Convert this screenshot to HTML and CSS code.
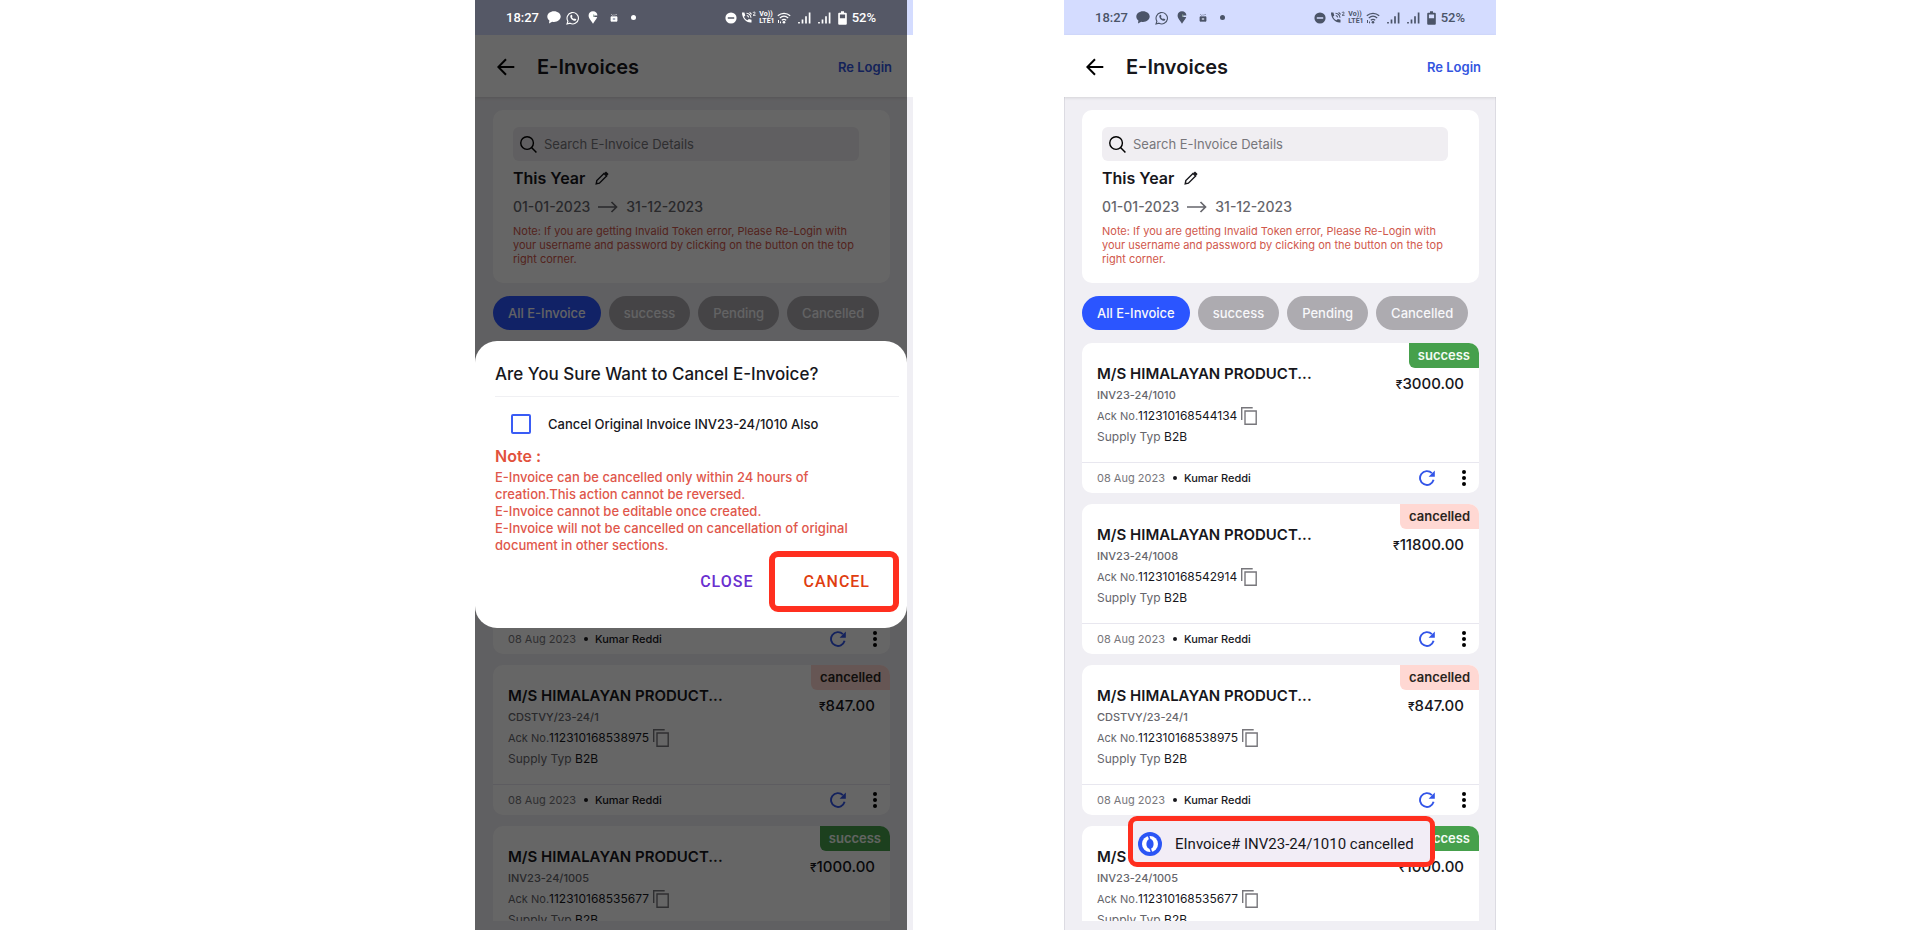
FILE: index.html
```html
<!DOCTYPE html>
<html lang="en">
<head>
<meta charset="utf-8">
<title>E-Invoices</title>
<link rel="stylesheet" href="styles.css">
</head>
<body>
<svg class="sprite" aria-hidden="true">
  <symbol id="chat" viewBox="0 0 14 13"><path d="M7 .3c3.700 0 6.700 2.300 6.700 5.300S10.700 11 7 11c-.6 0-1.200 0-1.800-.2L2 12.500l.4-3C1.100 8.600.3 7.200.3 5.600.3 2.600 3.300.3 7 .3z" fill="currentColor"/></symbol>
  <symbol id="whatsapp" viewBox="0 0 14 14"><path d="M1.900 10.200A5.700 5.700 0 1 1 4 12.200L1 13z" fill="none" stroke="currentColor" stroke-width="1.100"/><path d="M4.900 4l.9-.3.700 1.600-.6.800c.5 1 1.100 1.500 2 2l.8-.7 1.600.8c-.1 1.200-1.200 1.800-2.300 1.500C6 9.200 4.600 7.500 4.300 5.800c-.1-.7.1-1.300.6-1.800z" fill="currentColor"/></symbol>
  <symbol id="pin" viewBox="0 0 10 13"><path d="M5 .2c2.600 0 4.400 1.700 4.400 4.200H6.200V6H9.200C8.500 8.500 6.400 10 5 12.800 3.600 10 .6 8 .6 4.600.6 1.900 2.400.2 5 .2z" fill="currentColor"/><path d="M5.700 3.400v2.600" stroke="#8ea79a" stroke-width="1"/></symbol>
  <symbol id="bag" viewBox="0 0 8 9"><path d="M1 3.800h6v4.400H1zM1.500 1.300l1 1.200M4 1.500v1M6.500 1L5.500 2.200" fill="currentColor" stroke="currentColor" stroke-width=".8"/><path d="M2.800 5h2.400v2H2.800z" fill="#aab0c2"/></symbol>
  <symbol id="dnd" viewBox="0 0 12 12"><path fill-rule="evenodd" d="M6 .4a5.600 5.600 0 1 0 0 11.200A5.600 5.600 0 0 0 6 .4zM2.800 5.200h6.400v1.600H2.800z" fill="currentColor"/></symbol>
  <symbol id="call" viewBox="0 0 16 13"><path d="M1 1.500h2.400l.9 3L3 5.700c.8 1.700 2 2.800 3.500 3.500l1.300-1.300 2.700.9v2.700C5.600 12.300.8 7 1 1.500z" fill="currentColor"/><path d="M5.500 2.200c2.500.2 4.200 1.900 4.500 4.500M5.800 4.500c1 .2 1.700.9 1.900 1.900M8.600 1.300l2 2" fill="none" stroke="currentColor" stroke-width="1.100"/><path d="M12 1.800c.3-1 2.300-1 2.200.2 0 .8-1.300 1.300-2.200 2.300h2.600" fill="none" stroke="currentColor" stroke-width=".9"/></symbol>
  <symbol id="wifi" viewBox="0 0 14 12"><path d="M.8 3.800C4.400.6 9.600.6 13.200 3.800M2.800 6c2.500-2.100 5.900-2.100 8.400 0M4.800 8.200c1.300-1.100 3.100-1.100 4.400 0" fill="none" stroke="currentColor" stroke-width="1.200"/><circle cx="7" cy="10.300" r="1.300" fill="currentColor"/><path d="M1.500 8v3M3.500 9.500v1.800" stroke="currentColor" stroke-width="1"/></symbol>
  <symbol id="signal" viewBox="0 0 13 12"><path d="M1 10v1.600M4.500 7.500v4M8 4.200v7.300M11.600.6v11" stroke="currentColor" stroke-width="1.700"/></symbol>
  <symbol id="battery" viewBox="0 0 9 14"><path fill-rule="evenodd" d="M3 .2h3v1.500h1.800q1 0 1 1v10q0 1-1 1H1.200q-1 0-1-1v-10q0-1 1-1H3zM1.900 3.500v3.700h5.200V3.500z" fill="currentColor"/></symbol>
  <symbol id="back" viewBox="0 0 18 18"><path d="M17.300 9H1.500M9 1.300L1.300 9 9 16.700" fill="none" stroke="currentColor" stroke-width="2"/></symbol>
  <symbol id="search" viewBox="0 0 18 18"><circle cx="7.500" cy="7.500" r="6.700" fill="none" stroke="currentColor" stroke-width="1.500"/><path d="M12.200 12.200l5.200 5.200" stroke="currentColor" stroke-width="1.600"/></symbol>
  <symbol id="pencil" viewBox="0 0 14 14"><path d="M1.200 12.800l.6-3.200L9 2.400 11.600 5l-7.200 7.200z" fill="none" stroke="currentColor" stroke-width="1.400"/><path d="M9.300 2L11 .4 13.600 3 12 4.700z" fill="currentColor"/></symbol>
  <symbol id="arrow" viewBox="0 0 20 12"><path d="M0 6h18.500M13.500 1l5 5-5 5" fill="none" stroke="currentColor" stroke-width="1.700"/></symbol>
  <symbol id="copy" viewBox="0 0 16 18"><path d="M.7 13V.7h11" fill="none" stroke="currentColor" stroke-width="1.400"/><path d="M4 4h11.200v13.200H4z" fill="none" stroke="currentColor" stroke-width="1.400"/></symbol>
  <symbol id="refresh" viewBox="0 0 16 16"><path d="M14.600 9.800A6.900 6.900 0 1 1 12.900 3.200" fill="none" stroke="currentColor" stroke-width="1.900"/><path d="M15.800.6v6.200H9.600z" fill="currentColor"/></symbol>
  <symbol id="dots" viewBox="0 0 4 16"><circle cx="2" cy="2" r="2" fill="currentColor"/><circle cx="2" cy="8" r="2" fill="currentColor"/><circle cx="2" cy="14" r="2" fill="currentColor"/></symbol>
  <symbol id="logo" viewBox="0 0 24 24"><circle cx="12" cy="12" r="12" fill="#2b55f5"/><circle cx="12" cy="12" r="8" fill="#fff"/><ellipse cx="12" cy="12" rx="3.600" ry="5" fill="#2b55f5"/><path d="M10.400 3.500L12 8M13.600 20.500L12 16" stroke="#2b55f5" stroke-width="1.600"/></symbol>
</svg>

<main class="page">
  <section class="phone phone-dim">
    <div class="status status-light">
      <span class="clock">18:27</span>
      <svg class="i-chat"><use href="#chat"/></svg><svg class="i-wa"><use href="#whatsapp"/></svg><svg class="i-pin"><use href="#pin"/></svg><svg class="i-bag"><use href="#bag"/></svg><span class="dot"></span>
      <span class="spacer"></span>
      <svg class="i-dnd"><use href="#dnd"/></svg><svg class="i-call"><use href="#call"/></svg><span class="volte">Vo))<br>LTE1</span><svg class="i-wifi"><use href="#wifi"/></svg><svg class="i-signal"><use href="#signal"/></svg><svg class="i-signal"><use href="#signal"/></svg><svg class="i-battery"><use href="#battery"/></svg><span class="percent">52%</span>
    </div>
    <header class="bar">
      <button class="icon-btn" aria-label="Back"><svg class="i-back"><use href="#back"/></svg></button>
      <h1>E-Invoices</h1>
      <a class="relogin" href="#">Re Login</a>
    </header>
    <div class="content">
      <div class="filter">
        <label class="search"><svg class="i-search"><use href="#search"/></svg><input type="text" placeholder="Search E-Invoice Details" aria-label="Search E-Invoice Details"></label>
        <div class="period">This Year <button class="icon-btn" aria-label="Edit period"><svg class="i-pencil"><use href="#pencil"/></svg></button></div>
        <div class="dates">01-01-2023 <svg class="i-arrow"><use href="#arrow"/></svg> 31-12-2023</div>
        <p class="hint">Note: If you are getting Invalid Token error, Please Re-Login with your username and password by clicking on the button on the top right corner.</p>
      </div>
      <nav class="chips">
        <button class="chip chip-active">All E-Invoice</button><button class="chip">success</button><button class="chip">Pending</button><button class="chip">Cancelled</button>
      </nav>
      <div class="list">
        <article class="card">
          <div class="card-body">
            <div class="info">
              <h2>M/S HIMALAYAN PRODUCT...</h2>
              <div class="number">INV23-24/1010</div>
              <div class="ack">Ack No.<b>112310168544134</b><button class="icon-btn" aria-label="Copy"><svg class="i-copy"><use href="#copy"/></svg></button></div>
              <div class="supply">Supply Typ <b>B2B</b></div>
            </div>
            <div class="side"><span class="badge badge-ok">success</span><span class="amount"><small>₹</small>3000.00</span></div>
          </div>
          <footer class="card-foot"><span class="date">08 Aug 2023</span><span class="sep"></span><span class="who">Kumar Reddi</span><button class="icon-btn refresh" aria-label="Refresh"><svg class="i-refresh"><use href="#refresh"/></svg></button><button class="icon-btn" aria-label="More"><svg class="i-dots"><use href="#dots"/></svg></button></footer>
        </article>
        <article class="card">
          <div class="card-body">
            <div class="info">
              <h2>M/S HIMALAYAN PRODUCT...</h2>
              <div class="number">INV23-24/1008</div>
              <div class="ack">Ack No.<b>112310168542914</b><button class="icon-btn" aria-label="Copy"><svg class="i-copy"><use href="#copy"/></svg></button></div>
              <div class="supply">Supply Typ <b>B2B</b></div>
            </div>
            <div class="side"><span class="badge badge-off">cancelled</span><span class="amount"><small>₹</small>11800.00</span></div>
          </div>
          <footer class="card-foot"><span class="date">08 Aug 2023</span><span class="sep"></span><span class="who">Kumar Reddi</span><button class="icon-btn refresh" aria-label="Refresh"><svg class="i-refresh"><use href="#refresh"/></svg></button><button class="icon-btn" aria-label="More"><svg class="i-dots"><use href="#dots"/></svg></button></footer>
        </article>
        <article class="card">
          <div class="card-body">
            <div class="info">
              <h2>M/S HIMALAYAN PRODUCT...</h2>
              <div class="number">CDSTVY/23-24/1</div>
              <div class="ack">Ack No.<b>112310168538975</b><button class="icon-btn" aria-label="Copy"><svg class="i-copy"><use href="#copy"/></svg></button></div>
              <div class="supply">Supply Typ <b>B2B</b></div>
            </div>
            <div class="side"><span class="badge badge-off">cancelled</span><span class="amount"><small>₹</small>847.00</span></div>
          </div>
          <footer class="card-foot"><span class="date">08 Aug 2023</span><span class="sep"></span><span class="who">Kumar Reddi</span><button class="icon-btn refresh" aria-label="Refresh"><svg class="i-refresh"><use href="#refresh"/></svg></button><button class="icon-btn" aria-label="More"><svg class="i-dots"><use href="#dots"/></svg></button></footer>
        </article>
        <article class="card">
          <div class="card-body">
            <div class="info">
              <h2>M/S HIMALAYAN PRODUCT...</h2>
              <div class="number">INV23-24/1005</div>
              <div class="ack">Ack No.<b>112310168535677</b><button class="icon-btn" aria-label="Copy"><svg class="i-copy"><use href="#copy"/></svg></button></div>
              <div class="supply">Supply Typ <b>B2B</b></div>
            </div>
            <div class="side"><span class="badge badge-ok">success</span><span class="amount"><small>₹</small>1000.00</span></div>
          </div>
        </article>
      </div>
    </div>
    <div class="scrim">
      <div class="dialog" role="dialog" aria-labelledby="dialog-title">
        <h2 id="dialog-title">Are You Sure Want to Cancel E-Invoice?</h2>
        <label class="check"><input type="checkbox">Cancel Original Invoice INV23-24/1010 Also</label>
        <h3>Note :</h3>
        <p>E-Invoice can be cancelled only within 24 hours of creation.This action cannot be reversed.<br>E-Invoice cannot be editable once created.<br>E-Invoice will not be cancelled on cancellation of original document in other sections.</p>
        <div class="actions"><button class="close">CLOSE</button><button class="cancel">CANCEL</button></div>
      </div>
    </div>
  </section>
  <div class="edge"></div>

  <section class="phone phone-plain">
    <div class="status">
      <span class="clock">18:27</span>
      <svg class="i-chat"><use href="#chat"/></svg><svg class="i-wa"><use href="#whatsapp"/></svg><svg class="i-pin"><use href="#pin"/></svg><svg class="i-bag"><use href="#bag"/></svg><span class="dot"></span>
      <span class="spacer"></span>
      <svg class="i-dnd"><use href="#dnd"/></svg><svg class="i-call"><use href="#call"/></svg><span class="volte">Vo))<br>LTE1</span><svg class="i-wifi"><use href="#wifi"/></svg><svg class="i-signal"><use href="#signal"/></svg><svg class="i-signal"><use href="#signal"/></svg><svg class="i-battery"><use href="#battery"/></svg><span class="percent">52%</span>
    </div>
    <header class="bar">
      <button class="icon-btn" aria-label="Back"><svg class="i-back"><use href="#back"/></svg></button>
      <h1>E-Invoices</h1>
      <a class="relogin" href="#">Re Login</a>
    </header>
    <div class="content">
      <div class="filter">
        <label class="search"><svg class="i-search"><use href="#search"/></svg><input type="text" placeholder="Search E-Invoice Details" aria-label="Search E-Invoice Details"></label>
        <div class="period">This Year <button class="icon-btn" aria-label="Edit period"><svg class="i-pencil"><use href="#pencil"/></svg></button></div>
        <div class="dates">01-01-2023 <svg class="i-arrow"><use href="#arrow"/></svg> 31-12-2023</div>
        <p class="hint">Note: If you are getting Invalid Token error, Please Re-Login with your username and password by clicking on the button on the top right corner.</p>
      </div>
      <nav class="chips">
        <button class="chip chip-active">All E-Invoice</button><button class="chip">success</button><button class="chip">Pending</button><button class="chip">Cancelled</button>
      </nav>
      <div class="list">
        <article class="card">
          <div class="card-body">
            <div class="info">
              <h2>M/S HIMALAYAN PRODUCT...</h2>
              <div class="number">INV23-24/1010</div>
              <div class="ack">Ack No.<b>112310168544134</b><button class="icon-btn" aria-label="Copy"><svg class="i-copy"><use href="#copy"/></svg></button></div>
              <div class="supply">Supply Typ <b>B2B</b></div>
            </div>
            <div class="side"><span class="badge badge-ok">success</span><span class="amount"><small>₹</small>3000.00</span></div>
          </div>
          <footer class="card-foot"><span class="date">08 Aug 2023</span><span class="sep"></span><span class="who">Kumar Reddi</span><button class="icon-btn refresh" aria-label="Refresh"><svg class="i-refresh"><use href="#refresh"/></svg></button><button class="icon-btn" aria-label="More"><svg class="i-dots"><use href="#dots"/></svg></button></footer>
        </article>
        <article class="card">
          <div class="card-body">
            <div class="info">
              <h2>M/S HIMALAYAN PRODUCT...</h2>
              <div class="number">INV23-24/1008</div>
              <div class="ack">Ack No.<b>112310168542914</b><button class="icon-btn" aria-label="Copy"><svg class="i-copy"><use href="#copy"/></svg></button></div>
              <div class="supply">Supply Typ <b>B2B</b></div>
            </div>
            <div class="side"><span class="badge badge-off">cancelled</span><span class="amount"><small>₹</small>11800.00</span></div>
          </div>
          <footer class="card-foot"><span class="date">08 Aug 2023</span><span class="sep"></span><span class="who">Kumar Reddi</span><button class="icon-btn refresh" aria-label="Refresh"><svg class="i-refresh"><use href="#refresh"/></svg></button><button class="icon-btn" aria-label="More"><svg class="i-dots"><use href="#dots"/></svg></button></footer>
        </article>
        <article class="card">
          <div class="card-body">
            <div class="info">
              <h2>M/S HIMALAYAN PRODUCT...</h2>
              <div class="number">CDSTVY/23-24/1</div>
              <div class="ack">Ack No.<b>112310168538975</b><button class="icon-btn" aria-label="Copy"><svg class="i-copy"><use href="#copy"/></svg></button></div>
              <div class="supply">Supply Typ <b>B2B</b></div>
            </div>
            <div class="side"><span class="badge badge-off">cancelled</span><span class="amount"><small>₹</small>847.00</span></div>
          </div>
          <footer class="card-foot"><span class="date">08 Aug 2023</span><span class="sep"></span><span class="who">Kumar Reddi</span><button class="icon-btn refresh" aria-label="Refresh"><svg class="i-refresh"><use href="#refresh"/></svg></button><button class="icon-btn" aria-label="More"><svg class="i-dots"><use href="#dots"/></svg></button></footer>
        </article>
        <article class="card">
          <div class="card-body">
            <div class="info">
              <h2>M/S HIMALAYAN PRODUCT...</h2>
              <div class="number">INV23-24/1005</div>
              <div class="ack">Ack No.<b>112310168535677</b><button class="icon-btn" aria-label="Copy"><svg class="i-copy"><use href="#copy"/></svg></button></div>
              <div class="supply">Supply Typ <b>B2B</b></div>
            </div>
            <div class="side"><span class="badge badge-ok">success</span><span class="amount"><small>₹</small>1000.00</span></div>
          </div>
        </article>
      </div>
    </div>
    <div class="toast" role="status"><svg class="i-logo"><use href="#logo"/></svg>EInvoice# INV23-24/1010 cancelled</div>
  </section>
</main>
</body>
</html>
```
FILE: styles.css
```css
* { box-sizing: border-box; }
body { margin: 0; background: #fff; font-family: Inter, "Liberation Sans", sans-serif; color: #17171c; }
h1, h2, h3, p { margin: 0; }
button { font: inherit; border: 0; padding: 0; background: none; color: inherit; }
svg { display: block; flex: none; }
.sprite { position: absolute; width: 0; height: 0; }

.page { display: grid; grid-template-columns: 475fr 432fr 6fr 151fr 432fr 424fr; height: 100vh; min-height: 600px; }
.phone { position: relative; display: flex; flex-direction: column; min-width: 0; height: 100%; overflow: hidden; background: #f0eff4; }
.phone-dim { grid-column: 2; }
.phone-plain { grid-column: 5; box-shadow: inset 1px 0 #dcdbe2, inset -1px 0 #dcdbe2; }
.edge { grid-column: 3; background: linear-gradient(#d4dcff 35px, #fff 35px, #fff 97px, #f0eff4 97px); }

.status { flex: none; display: flex; align-items: center; height: 35px; padding: 0 31px; background: #d4dcff; color: #4b5468; font-family: Roboto, sans-serif; }
.status-light { position: relative; z-index: 2; background: #555866; color: #fff; }
.clock, .percent { font-size: 13px; font-weight: 500; }
.spacer { flex: 1; }
.dot { width: 5px; height: 5px; border-radius: 50%; background: currentColor; }
.volte { font-size: 7px; line-height: 7px; font-weight: 700; margin-right: 2px; }
.i-chat { width: 14px; height: 13px; margin-left: 8px; }
.i-wa { width: 14px; height: 14px; margin-left: 5px; }
.i-pin { width: 10px; height: 13px; margin: 0 12px 0 8px; }
.i-bag { width: 8px; height: 9px; margin-right: 13px; }
.i-dnd { width: 12px; height: 12px; margin-right: 4px; }
.i-call { width: 16px; height: 13px; margin-right: 2px; }
.i-wifi { width: 14px; height: 12px; margin-right: 7px; }
.i-signal { width: 13px; height: 12px; margin-right: 7px; }
.i-battery { width: 9px; height: 14px; margin-right: 5px; }

.bar { flex: none; display: flex; align-items: center; height: 62px; padding: 1px 15px 0 22px; background: #fff; box-shadow: 0 1px 3px rgba(0, 0, 0, .12); }
.icon-btn { display: block; }
.i-back { width: 18px; height: 18px; color: #000; }
.bar h1 { flex: 1; margin-left: 22px; font-size: 20px; font-weight: 600; line-height: 24px; }
.relogin { color: #3355e0; font-size: 13px; font-weight: 600; text-decoration: none; }

.content { flex: 1; min-height: 0; display: flex; flex-direction: column; padding: 13px 17px 9px 18px; }
.filter { flex: none; padding: 17px 31px 17px 20px; border-radius: 10px; background: #fff; }
.search { display: flex; align-items: center; gap: 7px; height: 34px; padding: 0 7px; border-radius: 6px; background: #f0eef2; }
.search input { flex: 1; min-width: 0; padding: 0; border: 0; outline: 0; background: none; font: 400 13px/20px Inter, sans-serif; color: #17171c; }
.search input::placeholder { color: #77767b; opacity: 1; }
.i-search { width: 17px; height: 17px; color: #000; }
.period { display: flex; align-items: center; gap: 10px; margin-top: 7px; font-size: 16px; font-weight: 600; line-height: 20px; }
.i-pencil { width: 14px; height: 14px; }
.dates { display: flex; align-items: center; gap: 8px; margin-top: 9px; font-size: 14px; font-weight: 500; line-height: 20px; color: #66666c; }
.i-arrow { width: 20px; height: 12px; }
.hint { margin: 7px -20px 0 0; padding-right: 20px; font-size: 11px; line-height: 14px; color: #d0584c; }

.chips { flex: none; display: flex; gap: 8px; margin-top: 13px; }
.chip { height: 34px; padding: 0 15px; border-radius: 17px; background: #adabb0; color: #f7f7fa; font-size: 13px; font-weight: 500; }
.chip-active { background: #2b55ff; }

.list { flex: 1; min-height: 0; overflow: hidden; display: flex; flex-direction: column; gap: 11px; margin-top: 13px; }
.card { flex: none; border-radius: 10px; overflow: hidden; background: #fff; }
.card-body { display: flex; justify-content: space-between; min-height: 119px; }
.info { padding: 21px 0 0 15px; display: grid; gap: 1px; align-content: start; font-size: 12px; line-height: 20px; color: #66666c; }
.info h2 { font-size: 15px; font-weight: 600; line-height: 20px; color: #17171c; }
.info b { font-size: 12px; font-weight: 400; color: #17171c; }
.number { font-size: 11px; font-weight: 500; }
.ack { display: flex; align-items: center; font-size: 11px; }
.i-copy { width: 16px; height: 18px; margin-left: 4px; color: #77767b; }
.side { display: flex; flex-direction: column; align-items: flex-end; }
.badge { padding: 0 9px; border-radius: 0 0 0 6px; font-size: 13px; font-weight: 600; line-height: 25px; }
.badge-ok { background: #46a04c; color: #f4fbf4; }
.badge-off { background: #ffd8d3; color: #2a2420; }
.amount { margin: 6px 15px 0 0; font-size: 15px; font-weight: 500; line-height: 20px; }
.amount small { font-size: 12px; }
.card-foot { display: flex; align-items: center; height: 31px; padding: 0 13px 0 15px; border-top: 1px solid #e8e7ef; font-size: 11px; }
.date { color: #77767b; }
.sep { width: 4px; height: 4px; margin: 0 7px 0 8px; border-radius: 50%; background: #17171c; }
.who { flex: 1; font-weight: 500; }
.refresh { margin-right: 27px; color: #3355e8; }
.i-refresh { width: 16px; height: 16px; }
.i-dots { width: 4px; height: 16px; color: #000; }

.scrim { position: absolute; inset: 0; display: flex; align-items: center; padding-top: 39px; background: rgba(0, 0, 0, .6); }
.dialog { width: 100%; padding: 21px 8px 16px 20px; border-radius: 22px; background: #fff; }
.dialog h2 { padding-bottom: 10px; border-bottom: 1px solid #f0f0f3; font-size: 17px; font-weight: 500; line-height: 24px; }
.check { display: flex; align-items: center; gap: 17px; margin: 17px 0 0 16px; font-size: 13px; font-weight: 500; line-height: 20px; }
.check input { appearance: none; width: 20px; height: 20px; margin: 0; border: 2px solid #3a5cf5; border-radius: 2px; }
.dialog h3 { margin-top: 11px; font-size: 16px; font-weight: 600; line-height: 22px; color: #e2513c; }
.dialog p { margin: 2px 34px 0 0; font-size: 13px; font-weight: 500; line-height: 17px; color: #e0574b; }
.actions { display: flex; justify-content: flex-end; align-items: center; gap: 16px; margin-top: -3px; font-family: Roboto, sans-serif; font-size: 16px; font-weight: 500; }
.actions button { letter-spacing: 1px; }
.close { color: #6a2fd0; }
.cancel { height: 61px; padding: 0 23px 0 28px; border: 6px solid #ff2f1f; border-radius: 9px; color: #e03d10; }

.toast { position: absolute; left: 64px; right: 61px; bottom: 63px; display: flex; align-items: center; gap: 13px; height: 51px; padding: 4px 0 0 5px; border: 5px solid #ff2f1f; border-radius: 9px; background: #f2edf6; font-family: Roboto, sans-serif; font-size: 15px; white-space: nowrap; color: #17171c; }
.i-logo { width: 24px; height: 24px; }
```
